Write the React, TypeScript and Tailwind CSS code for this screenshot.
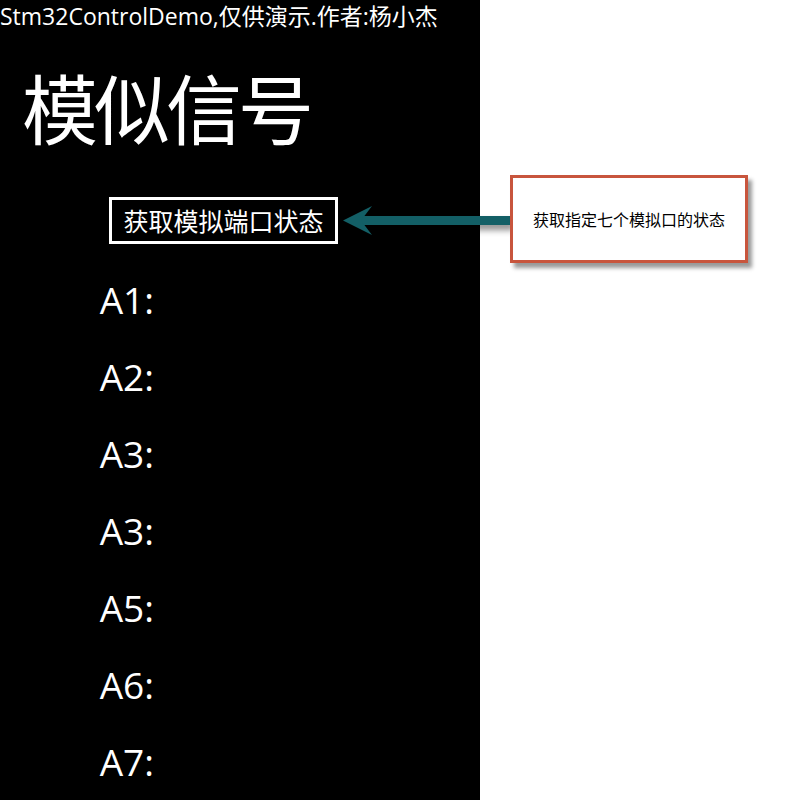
import React from "react";

const FONT = '"Open Sans", "Noto Sans CJK SC", sans-serif';
const CJK = '"Noto Sans CJK SC", "Open Sans", sans-serif';

export default function App() {
  const labels = ["A1:", "A2:", "A3:", "A3:", "A5:", "A6:", "A7:"];
  return (
    <div className="relative flex w-[798px] h-[800px] overflow-hidden bg-white">
      <div className="flex flex-col w-[480px] h-[800px] bg-black text-white" style={{ fontFamily: FONT }}>
        <div className="text-[23px] leading-[28px] pt-[2px] whitespace-nowrap">
          Stm32ControlDemo,仅供演示.作者:杨小杰
        </div>
        <div
          className="mt-[31px] pl-[22px] text-[76px] leading-[90px] tracking-[-4px] whitespace-nowrap"
          style={{ fontFamily: CJK }}
        >
          模似信号
        </div>
        <div className="mt-[46px] pl-[109px]">
          <div
            className="inline-flex items-center justify-center w-[229px] h-[47px] border-[3px] border-white text-[25px] leading-none"
            style={{ fontFamily: CJK }}
          >
            获取模拟端口状态
          </div>
        </div>
        <div className="flex flex-col mt-[31px] w-[154px]">
          {labels.map((l, i) => (
            <div key={i} className="h-[77px] text-right text-[37px] leading-[50px]">
              {l}
            </div>
          ))}
        </div>
      </div>

      <svg
        className="absolute left-[340px] top-[200px]"
        width="175"
        height="45"
        viewBox="340 200 175 45"
        style={{ filter: "drop-shadow(2px 5px 3px rgba(0,0,0,0.45))" }}
      >
        <rect x="360" y="216" width="152" height="9" fill="#135f66" />
        <polygon points="343,220.5 372,206 361,220.5 372,235" fill="#135f66" />
      </svg>

      <div
        className="absolute left-[510px] top-[175px] w-[238px] h-[88px] border-[3px] border-[#c8553d] bg-white flex items-center justify-center text-[16px] text-black shadow-[4px_5px_4px_rgba(0,0,0,0.4)]"
        style={{ fontFamily: CJK }}
      >
        获取指定七个模拟口的状态
      </div>
    </div>
  );
}
